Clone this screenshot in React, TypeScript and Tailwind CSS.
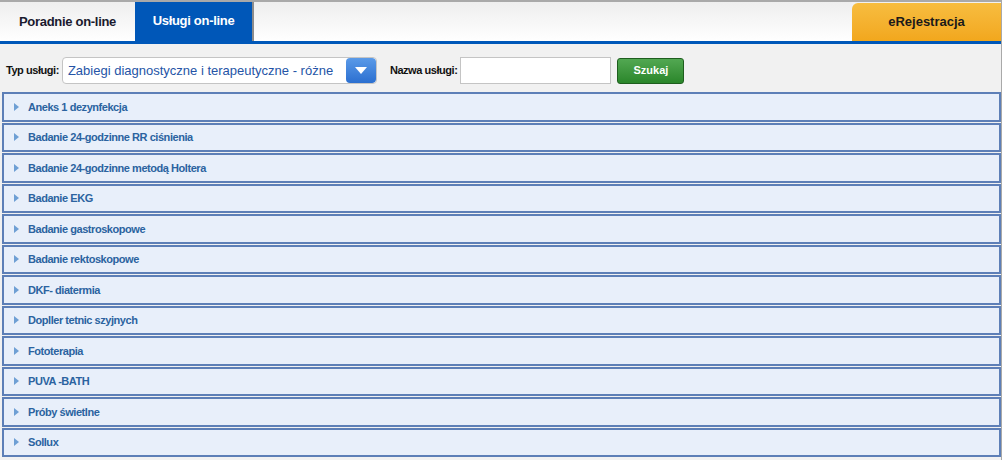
const services = [
  'Aneks 1 dezynfekcja',
  'Badanie 24-godzinne RR ciśnienia',
  'Badanie 24-godzinne metodą Holtera',
  'Badanie EKG',
  'Badanie gastroskopowe',
  'Badanie rektoskopowe',
  'DKF- diatermia',
  'Dopller tetnic szyjnych',
  'Fototerapia',
  'PUVA -BATH',
  'Próby świetlne',
  'Sollux',
]

export default function App() {
  return (
    <div className="w-[1002px] h-[460px] overflow-hidden bg-[#f1f1f1] border-t-2 border-r border-[#a9a9a9] font-['Liberation_Sans',Arial,sans-serif]">
      {/* tabs */}
      <div className="flex h-[39px]">
        <div className="w-[135px] flex items-center justify-center bg-gradient-to-b from-[#eeeeee] to-white text-[13px] tracking-[-0.3px] font-bold text-[#1a1a2e]">
          Poradnie on-line
        </div>
        <div className="w-[117px] -mt-[2px] flex items-center justify-center bg-[#0057b8] text-[13px] tracking-[-0.3px] font-bold text-white">
          Usługi on-line
        </div>
        <div className="w-[2px] bg-[#8c8c8c]" />
        <div className="flex-1 bg-gradient-to-b from-[#eeeeee] to-white" />
        <div className="w-[149px] mt-[1px] rounded-tl-[6px] flex items-center justify-center bg-gradient-to-b from-[#f7bd3f] to-[#f2a71c] text-[13px] font-bold text-[#1a1a1a]">
          eRejestracja
        </div>
      </div>
      <div className="h-[3px] bg-[#0058b9]" />

      {/* search bar */}
      <div className="h-[48px] flex items-center pl-[6px] pt-[5px]">
        <span className="text-[11px] tracking-[-0.45px] font-bold text-[#111]">Typ usługi:</span>
        <div className="ml-[3px] w-[315px] h-[27px] flex rounded-[4px] border border-[#c4c4c4] bg-white overflow-hidden">
          <div className="flex-1 flex items-center pl-[5px] text-[13px] text-[#2554a6] whitespace-nowrap">
            Zabiegi diagnostyczne i terapeutyczne - różne
          </div>
          <div className="w-[30px] flex items-center justify-center rounded-[4px] bg-gradient-to-b from-[#5a9ae8] to-[#2b6fd0]">
            <svg width="12" height="7" viewBox="0 0 12 7">
              <path d="M0 0 L12 0 L6 7 Z" fill="white" />
            </svg>
          </div>
        </div>
        <span className="ml-[13px] text-[11px] tracking-[-0.45px] font-bold text-[#111]">Nazwa usługi:</span>
        <div className="ml-[3px] w-[151px] h-[27px] border border-[#c4c4c4] bg-white" />
        <button className="ml-[6px] w-[67px] h-[26px] rounded-[3px] border border-[#1e5e1e] bg-gradient-to-b from-[#52a852] to-[#2a862a] text-[11px] font-bold text-white">
          Szukaj
        </button>
      </div>

      {/* list */}
      <div className="flex flex-col gap-px pl-[2px]">
        {services.map((s) => (
          <div
            key={s}
            className="h-[29.5px] flex items-center border-2 border-[#5d7fb7] bg-[#e8effa] pl-[10px]"
          >
            <svg width="5" height="8" viewBox="0 0 5 8">
              <path d="M0 0 L5 4 L0 8 Z" fill="#6e9fd4" />
            </svg>
            <span className="ml-[9px] text-[11px] tracking-[-0.45px] font-bold text-[#2b63a0]">{s}</span>
          </div>
        ))}
      </div>
    </div>
  )
}
